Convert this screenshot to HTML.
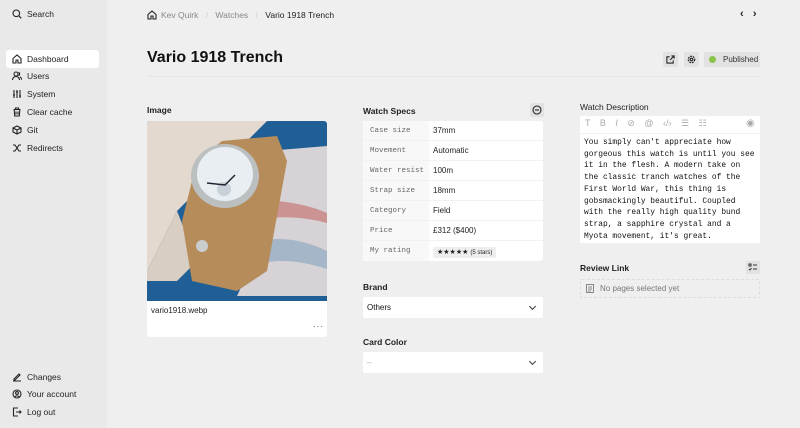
<!DOCTYPE html>
<html><head><meta charset="utf-8"><style>
*{box-sizing:border-box;margin:0;padding:0}
body{width:800px;height:428px;overflow:hidden;background:#efefef;font-family:"Liberation Sans",sans-serif;color:#111;font-size:9px;position:relative}
.side{position:absolute;left:0;top:0;width:107px;height:428px;background:#e9e9e9}
.nav{position:absolute;left:6px;width:93px;height:18px;display:flex;align-items:center;padding-left:6px;font-size:8.5px;color:#222}
.nav svg{width:10px;height:10px;margin-right:5px;fill:none;stroke:#222;stroke-width:1.1}
.nav.act{background:#fff;border-radius:3px}
.abs{position:absolute}
.lbl{position:absolute;font-size:8.5px;font-weight:bold;color:#222}
.tbl{position:absolute;left:363px;top:121px;width:180px;background:#fff;border-radius:3px}
.tr{height:20px;display:flex;align-items:center;border-bottom:1px solid #f2f2f2}
.tr .k{width:66px;height:100%;background:#f8f8f8;font-family:"Liberation Mono",monospace;font-size:7.5px;color:#666;padding-left:7px;display:flex;align-items:center}
.tr .v{padding-left:4px;font-size:8px;color:#222}
.sel{position:absolute;left:363px;width:180px;height:21px;background:#fff;border-radius:2px;font-size:8px;padding-left:4px;display:flex;align-items:center}
.sel:after{content:"";position:absolute;right:8px;top:7px;width:4px;height:4px;border-right:1.2px solid #333;border-bottom:1.2px solid #333;transform:rotate(45deg)}
</style></head><body>
<div class="side">
 <div class="nav" style="top:5px"><svg viewBox="0 0 10 10"><circle cx="4.3" cy="4.3" r="3.3"/><path d="M6.8 6.8L9.3 9.3"/></svg>Search</div>
 <div class="nav act" style="top:50px"><svg viewBox="0 0 10 10"><path d="M1 4.5L5 1l4 3.5V9H6V6H4v3H1z"/></svg>Dashboard</div>
 <div class="nav" style="top:67px"><svg viewBox="0 0 10 10"><circle cx="4" cy="3" r="2"/><path d="M0.5 9c0-2 1.5-3.5 3.5-3.5S7.5 7 7.5 9M6.5 1.2a2 2 0 010 3.6M8 5.8c1 .6 1.5 1.7 1.5 3"/></svg>Users</div>
 <div class="nav" style="top:85px"><svg viewBox="0 0 10 10"><path d="M2 1v8M5 1v8M8 1v8M1 6h2M4 3h2M7 7h2"/></svg>System</div>
 <div class="nav" style="top:103px"><svg viewBox="0 0 10 10"><path d="M1.5 2.5h7M3.5 2.5V1h3v1.5M2.2 2.5l.5 6.5h4.6l.5-6.5M4 4.5v3M6 4.5v3"/></svg>Clear cache</div>
 <div class="nav" style="top:121px"><svg viewBox="0 0 10 10"><path d="M5 1l4 2v4L5 9 1 7V3zM1 3l4 2 4-2M5 5v4"/></svg>Git</div>
 <div class="nav" style="top:139px"><svg viewBox="0 0 10 10"><path d="M1 2h2l4 6h2M1 8h2l4-6h2"/></svg>Redirects</div>
 <div class="nav" style="top:368px"><svg viewBox="0 0 10 10"><path d="M1 9h8M2 7l5-5 1 1-5 5H2z"/></svg>Changes</div>
 <div class="nav" style="top:385px"><svg viewBox="0 0 10 10"><circle cx="5" cy="5" r="4"/><circle cx="5" cy="4" r="1.4"/><path d="M2.5 8c1-1.5 4-1.5 5 0"/></svg>Your account</div>
 <div class="nav" style="top:403px"><svg viewBox="0 0 10 10"><path d="M6 1H1.5v8H6M4 5h5M7.5 3.5L9 5 7.5 6.5"/></svg>Log out</div>
</div>

<svg class="abs" style="left:147px;top:10px" width="10" height="10" viewBox="0 0 10 10" fill="none" stroke="#222" stroke-width="1.1"><path d="M1 4.5L5 1l4 3.5V9H6V6H4v3H1z"/></svg>
<div class="abs" style="left:161px;top:10px;font-size:8.5px;color:#888">Kev Quirk <span style="color:#ccc;margin:0 5px">/</span> Watches <span style="color:#ccc;margin:0 5px">/</span> <span style="color:#222">Vario 1918 Trench</span></div>
<div class="abs" style="left:740px;top:8px;font-size:11px;font-weight:bold;color:#222">‹&nbsp;&nbsp;&nbsp;›</div>

<div class="abs" style="left:147px;top:49px;font-size:16px;font-weight:bold;color:#111">Vario 1918 Trench</div>
<div class="abs" style="left:147px;top:76px;width:613px;height:1px;background:#e6e6e6"></div>
<div class="abs" style="left:663px;top:52px;width:15px;height:15px;background:#e2e2e2;border-radius:2px"></div>
<svg class="abs" style="left:666px;top:55px" width="9" height="9" viewBox="0 0 10 10" fill="none" stroke="#222" stroke-width="1.2"><path d="M4 2H1v7h7V6M6 1h3v3M9 1L4.5 5.5"/></svg>
<div class="abs" style="left:684px;top:52px;width:15px;height:15px;background:#e2e2e2;border-radius:2px"></div>
<svg class="abs" style="left:687px;top:55px" width="9" height="9" viewBox="0 0 10 10" fill="none" stroke="#222" stroke-width="1.3"><circle cx="5" cy="5" r="1.5"/><circle cx="5" cy="5" r="3.6" stroke-dasharray="2 1"/></svg>
<div class="abs" style="left:704px;top:52px;width:56px;height:15px;background:#e2e2e2;border-radius:2px;font-size:8px;color:#333;padding:3px 0 0 19px">Published</div>
<div class="abs" style="left:709px;top:56px;width:7px;height:7px;border-radius:50%;background:#8bc34a"></div>

<div class="lbl" style="left:147px;top:105px">Image</div>
<svg class="abs" style="left:147px;top:121px;border-radius:3px 3px 0 0" width="180" height="180" viewBox="0 0 180 180">
 <rect width="180" height="180" fill="#1f5f96"/>
 <path d="M0 0h120L90 30 30 90 0 150z" fill="#e3d9cf"/>
 <path d="M0 150L30 90l20 50 -20 20H0z" fill="#d8cec4"/>
 <path d="M120 30l60 -5v150H90c20-40 20-100 30-145z" fill="#d6d2d6"/>
 <path d="M115 120c20-5 45 0 65 10v18c-25-8-45-10-65-6z" fill="#a5b6c8"/>
 <path d="M125 80c15 0 40 5 55 12v10c-18-5-40-7-55-5z" fill="#cc9393"/>
 <path d="M75 20l55-5 10 25-20 110-30 20-45-10-10-60 15-60z" fill="#b58c5a"/>
 <ellipse cx="78" cy="55" rx="34" ry="32" fill="#bcbfc0"/>
 <ellipse cx="78" cy="53" rx="28" ry="27" fill="#e8eef1"/>
 <circle cx="77" cy="68" r="7" fill="#c8d0d8"/>
 <path d="M60 62l18 2 10-10" stroke="#223" stroke-width="1.5" fill="none"/>
 <circle cx="55" cy="125" r="6" fill="#c9cdd0"/>
</svg>
<div class="abs" style="left:147px;top:301px;width:180px;height:36px;background:#fff;border-radius:0 0 3px 3px"></div>
<div class="abs" style="left:151px;top:306px;font-size:8px;color:#222">vario1918.webp</div>
<div class="abs" style="left:313px;top:322px;font-size:8px;color:#333;letter-spacing:1px">···</div>

<div class="lbl" style="left:363px;top:106px">Watch Specs</div>
<div class="abs" style="left:530px;top:103px;width:14px;height:14px;background:#e2e2e2;border-radius:2px"></div>
<svg class="abs" style="left:532px;top:105px" width="10" height="10" viewBox="0 0 10 10" fill="none" stroke="#222" stroke-width="1.1"><circle cx="5" cy="5" r="4"/><path d="M3 5h4"/></svg>
<div class="tbl">
 <div class="tr"><div class="k">Case size</div><div class="v">37mm</div></div>
 <div class="tr"><div class="k">Movement</div><div class="v">Automatic</div></div>
 <div class="tr"><div class="k">Water resist</div><div class="v">100m</div></div>
 <div class="tr"><div class="k">Strap size</div><div class="v">18mm</div></div>
 <div class="tr"><div class="k">Category</div><div class="v">Field</div></div>
 <div class="tr"><div class="k">Price</div><div class="v">£312 ($400)</div></div>
 <div class="tr" style="border:0"><div class="k">My rating</div><div class="v"><span style="background:#eee;padding:2px 4px;border-radius:2px;font-size:7px">★★★★★ <span style="font-size:6px">(5 stars)</span></span></div></div>
</div>

<div class="lbl" style="left:363px;top:282px">Brand</div>
<div class="sel" style="top:297px">Others</div>
<div class="lbl" style="left:363px;top:337px">Card Color</div>
<div class="sel" style="top:352px;color:#aaa">–</div>

<div class="lbl" style="left:580px;top:102px;font-weight:normal;color:#222">Watch Description</div>
<div class="abs" style="left:580px;top:116px;width:180px;height:127px;background:#fff;border-radius:2px"></div>
<div class="abs" style="left:580px;top:133px;width:180px;height:1px;background:#f0f0f0"></div>
<div class="abs" style="left:585px;top:118px;font-size:9px;color:#aaa;word-spacing:7px">T B <i>I</i> ⊘ @ ‹/› ☰ ☷</div>
<div class="abs" style="left:746px;top:118px;font-size:10px;color:#aaa">◉</div>
<div class="abs" style="left:584px;top:137px;width:176px;font-family:'Liberation Mono',monospace;font-size:7.9px;line-height:11.7px;color:#111;white-space:pre">You simply can't appreciate how
gorgeous this watch is until you see
it in the flesh. A modern take on
the classic tranch watches of the
First World War, this thing is
gobsmackingly beautiful. Coupled
with the really high quality bund
strap, a sapphire crystal and a
Myota movement, it's great.</div>

<div class="lbl" style="left:580px;top:263px">Review Link</div>
<div class="abs" style="left:746px;top:261px;width:14px;height:13px;background:#e2e2e2;border-radius:2px"></div>
<svg class="abs" style="left:748px;top:263px" width="10" height="9" viewBox="0 0 10 9" fill="none" stroke="#333" stroke-width="1"><path d="M1 1h2v2H1zM5 2h4M1 6l1 1 1.5-2M5 6h4"/></svg>
<div class="abs" style="left:580px;top:279px;width:180px;height:19px;border:1px dashed #ddd;border-radius:2px;font-size:8px;color:#777;padding:4px 0 0 19px">No pages selected yet</div>
<svg class="abs" style="left:586px;top:284px" width="8" height="9" viewBox="0 0 8 9" fill="none" stroke="#888" stroke-width="1"><path d="M.5.5h7v8h-7zM2 3h4M2 5h4M2 7h3"/></svg>
</body></html>
